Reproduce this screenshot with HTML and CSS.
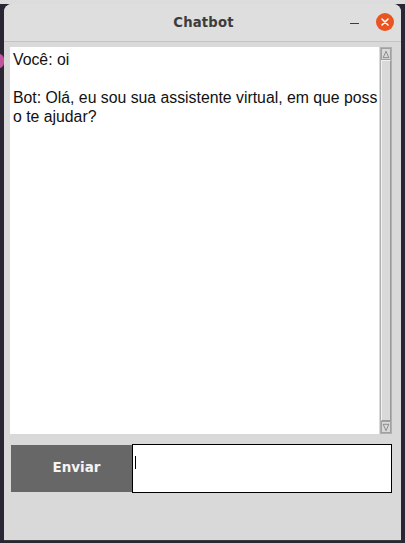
FILE: index.html
```html
<!DOCTYPE html>
<html>
<head>
<meta charset="utf-8">
<link rel="stylesheet" href="styles.css">
</head>
<body>
<div class="desktop">
  <div class="dot"></div>
  <div class="window">
    <div class="titlebar">
      <span class="title">Chatbot</span>
      <div class="controls">
        <span class="minimize"></span>
        <span class="close">
          <svg width="18" height="18" viewBox="0 0 18 18">
            <circle cx="9" cy="9" r="9" fill="#e95420"/>
            <path d="M6 6 L12 12 M12 6 L6 12" stroke="#fff" stroke-width="1.6" stroke-linecap="round"/>
          </svg>
        </span>
      </div>
    </div>
    <div class="content">
      <div class="chatrow">
        <div class="chat">Você: oi<br><br>Bot: Olá, eu sou sua assistente virtual, em que poss<br>o te ajudar?</div>
        <div class="scrollbar">
          <div class="arrow">
            <svg width="10" height="11" viewBox="0 0 10 11"><path d="M5 1.5 L1.5 9.5 L8.5 9.5 Z" fill="#d9d9d9" stroke="#7a7a7a" stroke-width="1"/></svg>
          </div>
          <div class="slider"></div>
          <div class="arrow">
            <svg width="10" height="11" viewBox="0 0 10 11"><path d="M5 9.5 L1.5 1.5 L8.5 1.5 Z" fill="#d9d9d9" stroke="#7a7a7a" stroke-width="1"/></svg>
          </div>
        </div>
      </div>
      <div class="inputrow">
        <button class="send">Enviar</button>
        <div class="entry"><span class="cursor"></span></div>
      </div>
    </div>
  </div>
</div>
</body>
</html>
```

FILE: styles.css
```css
html, body {
  margin: 0;
  padding: 0;
}
body {
  width: 405px;
  height: 543px;
  overflow: hidden;
  background: #2a2633;
}
.desktop {
  position: relative;
  height: 543px;
  padding: 4px 4px 0 4px;
  box-sizing: border-box;
  background: linear-gradient(#dcdcdc 0, #dcdcdc 4px, #2a2633 4px);
}
.dot {
  position: absolute;
  left: -6px;
  top: 54px;
  width: 10px;
  height: 14px;
  border-radius: 6px;
  background: #c2549e;
}
.window {
  height: 537px;
  background: #d9d9d9;
  border-radius: 8px 8px 0 0;
  display: flex;
  flex-direction: column;
  border-bottom: 1px solid #3a3a3a;
  box-sizing: border-box;
}
.titlebar {
  height: 37px;
  flex: none;
  position: relative;
  display: flex;
  align-items: center;
  justify-content: center;
  background: #dedede;
  border-radius: 8px 8px 0 0;
  border-bottom: 1px solid #c4c4c4;
}
.title {
  font-family: "DejaVu Sans", sans-serif;
  font-weight: bold;
  font-size: 13.2px;
  color: #3c3c3c;
  letter-spacing: 0.2px;
  margin-left: 2px;
}
.controls {
  position: absolute;
  right: 7px;
  top: 9px;
  display: flex;
  align-items: center;
  gap: 17px;
}
.minimize {
  width: 9px;
  height: 1.5px;
  background: #3c3c3c;
  margin-top: 3px;
}
.close {
  display: flex;
}
.content {
  flex: 1;
  padding: 5px 9px 0 6px;
  display: flex;
  flex-direction: column;
}
.chatrow {
  display: flex;
  height: 387px;
}
.chat {
  width: 366px;
  background: #fff;
  padding: 3px 0 0 3px;
  font-family: "Liberation Sans", Arial, sans-serif;
  font-size: 15.8px;
  line-height: 19px;
  color: #111;
  white-space: nowrap;
  overflow: hidden;
}
.scrollbar {
  width: 12px;
  margin-left: 1px;
  background: #c6c6c6;
  display: flex;
  flex-direction: column;
  border: 1px solid #b0b0b0;
  box-sizing: border-box;
}
.arrow {
  height: 12px;
  display: flex;
  justify-content: center;
  align-items: center;
  background: #d9d9d9;
  border: 1px solid #a0a0a0;
  box-sizing: border-box;
}
.slider {
  flex: 1;
  background: #d9d9d9;
  border-left: 1px solid #f0f0f0;
  border-top: 1px solid #f0f0f0;
  border-right: 1px solid #9a9a9a;
  border-bottom: 1px solid #9a9a9a;
}
.inputrow {
  display: flex;
  margin-top: 10px;
  height: 49px;
}
.send {
  width: 121px;
  height: 47px;
  margin: 1px 0 0 1px;
  border: none;
  background: #676767;
  color: #f4f4f4;
  font-family: "DejaVu Sans", sans-serif;
  font-weight: bold;
  font-size: 13.5px;
  padding: 0 0 4px 10px;
}
.entry {
  flex: 1;
  background: #fff;
  border: 1px solid #000;
  position: relative;
}
.cursor {
  position: absolute;
  left: 2px;
  top: 11px;
  width: 1px;
  height: 13px;
  background: #000;
}
```
